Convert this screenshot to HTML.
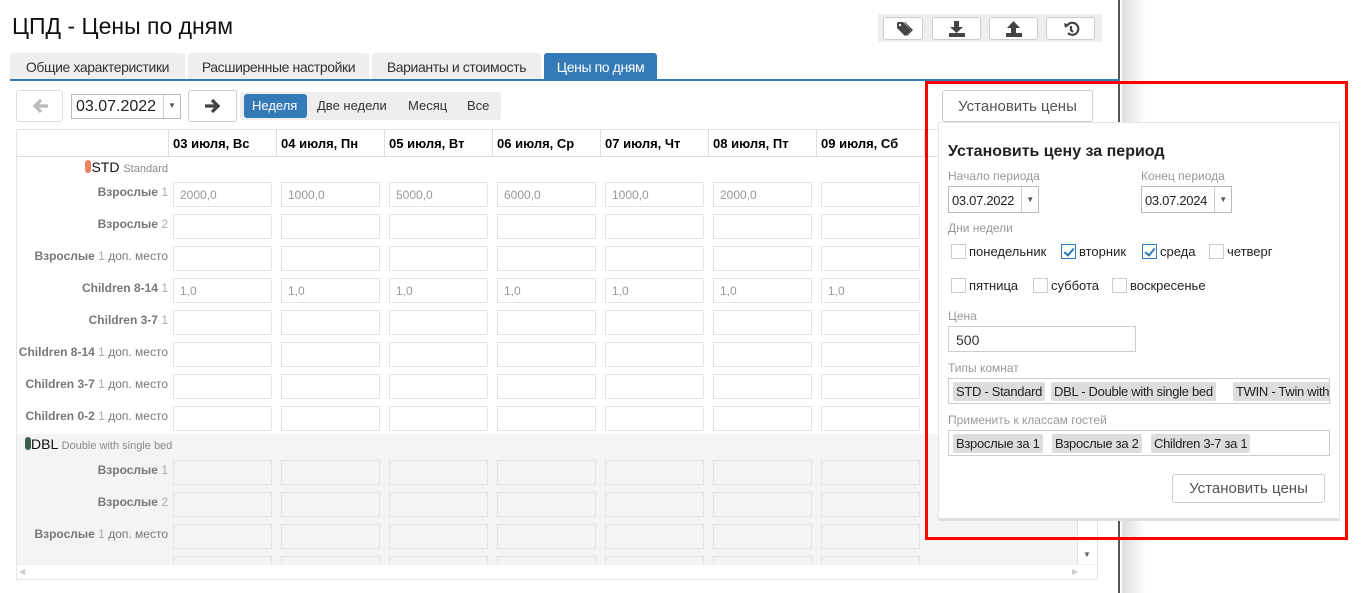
<!DOCTYPE html>
<html><head><meta charset="utf-8"><style>
*{box-sizing:border-box;margin:0;padding:0}
body{width:1362px;height:593px;overflow:hidden;background:#fff;font-family:"Liberation Sans",sans-serif;font-size:13px;color:#333;position:relative}
.a{position:absolute}
.main{left:0;top:0;width:1120px;height:593px;background:#fff;border-right:2px solid #555}
.shadow{left:1122px;top:0;width:24px;height:593px;background:linear-gradient(to right,#ddd,#fff)}
h1{position:absolute;left:12px;top:13px;font-size:23px;font-weight:normal;color:#111}
.tg{left:878px;top:14px;width:224px;height:28px;background:#eee;border-radius:2px}
.tb{top:17px;height:23px;background:#fff;border:1px solid #ccc;border-radius:3px}
.tab{top:53px;height:27px;background:#eee;padding:6px 0 0;text-align:center;font-size:14px;letter-spacing:-0.4px;white-space:nowrap;border-radius:3px 3px 0 0;color:#333}
.tab.act{background:#337ab7;color:#fff}
.line{left:10px;top:79px;width:1110px;height:2px;background:#337ab7}
.btn{background:#fff;border:1px solid #ccc;border-radius:3px}
.seg{left:240px;top:92px;width:261px;height:28px;background:#eee;border-radius:3px}
.sg{top:94px;height:24px;padding:4px 8px 0;font-size:13px;color:#333}
.date{background:#fff;border:1px solid #bbb;font-size:13px;color:#222;white-space:nowrap;overflow:hidden}
.date span.c{position:absolute;right:0;top:0;bottom:0;width:17px;border-left:1px solid #ccc;font-size:8px;text-align:center;line-height:22px;color:#555;background:#fff}
.grid{left:16px;top:129px;width:1082px;height:451px;border:1px solid #e3e3e3;overflow:hidden}
.hd{top:0;height:27px;border-bottom:1px solid #ddd;width:1082px}
.hc{top:0;height:27px;border-left:1px solid #ddd;font-weight:bold;font-size:13px;color:#000;padding:6px 0 0 4px}
.row{left:0;height:32px;width:1060px}
.lab{position:absolute;left:0;width:151px;text-align:right;top:7px;font-weight:bold;color:#777;font-size:12px;white-space:nowrap}
.lab i{font-style:normal;font-weight:normal;color:#aaa}
.lab b{font-weight:normal;color:#777}
.in{position:absolute;top:4px;width:99px;height:25px;border:1px solid #e3e3e3;background:#fff;color:#999;font-size:12px;padding:5px 0 0 6px}
.gray .in{background:#f4f4f4}
.rt{height:24px;font-size:14px;color:#111}
.rt small{font-size:11px;color:#888}
.pop{left:938px;top:122px;width:402px;height:399px;background:#fff;border:1px solid #e3e3e3;border-bottom:3px solid #e0e0e0}
.pl{color:#999;font-size:12px}
.cb{display:inline-block;width:15px;height:15px;border:1px solid #ccc;vertical-align:-3px;margin-right:3px;position:relative;background:#fff}
.cb.on{border-color:#337ab7}
.cb.on:after{content:"";position:absolute;left:4px;top:1px;width:4px;height:8px;border:solid #337ab7;border-width:0 2px 2px 0;transform:rotate(40deg)}
.ck{font-size:13px;color:#222}
.box{border:1px solid #ccc;background:#fff;overflow:hidden}
.tag{position:absolute;top:3px;height:19px;background:#ddd;padding:2px 3px;font-size:13px;letter-spacing:-0.3px;color:#222;white-space:nowrap;border-radius:2px}
.red{left:925px;top:81px;width:423px;height:459px;border:3px solid #f00}
</style></head><body>
<div class="a main"></div>
<div class="a shadow"></div>
<h1>ЦПД - Цены по дням</h1>
<div class="a tg"></div>
<div class="a tb" style="left:883px;width:40px"><svg width="40" height="22"><g transform="translate(13,4)" fill="#444"><path d="M0 1v5l8 8 6-6-8-8H1z"/><circle cx="3" cy="3" r="1.2" fill="#fff"/><path d="M8 0l8 8-6 6-1-1 5-5-7-8z"/></g></svg></div>
<div class="a tb" style="left:932px;width:49px"><svg width="49" height="22"><g fill="#444"><rect x="21" y="3" width="5" height="7"/><path d="M17 9h13l-6.5 6z"/><rect x="16" y="15" width="16" height="4"/></g></svg></div>
<div class="a tb" style="left:989px;width:49px"><svg width="49" height="22"><g fill="#444"><rect x="21" y="9" width="5" height="7"/><path d="M17 10h13l-6.5-7z"/><rect x="16" y="15" width="16" height="4"/></g></svg></div>
<div class="a tb" style="left:1046px;width:49px"><svg width="49" height="22"><g fill="none" stroke="#444" stroke-width="2.2"><path d="M20 8a6 6 0 1 1 1 7"/><path d="M24 8v4l2 2"/></g><path d="M17 5l5 2-4 3z" fill="#444"/></svg></div>
<div class="a tab" style="left:10px;width:175px">Общие характеристики</div>
<div class="a tab" style="left:188px;width:181px">Расширенные настройки</div>
<div class="a tab" style="left:372px;width:169px">Варианты и стоимость</div>
<div class="a tab act" style="left:544px;width:113px">Цены по дням</div>
<div class="a line"></div>
<div class="a btn" style="left:16px;top:90px;width:47px;height:32px;border-color:#ddd"><svg width="47" height="30"><path d="M31 15H19M24 9l-6 6 6 6" stroke="#bbb" stroke-width="3.2" fill="none"/></svg></div>
<div class="a date" style="left:71px;top:94px;width:110px;height:25px;font-size:16px;padding:3px 0 0 4px">03.07.2022<span class="c">▼</span></div>
<div class="a btn" style="left:188px;top:90px;width:49px;height:32px"><svg width="47" height="30"><path d="M16 15h12M23 9l6 6-6 6" stroke="#444" stroke-width="3.2" fill="none"/></svg></div>
<div class="a seg"></div>
<div class="a sg" style="left:244px;width:63px;background:#337ab7;color:#fff;border-radius:3px">Неделя</div>
<div class="a sg" style="left:309px">Две недели</div>
<div class="a sg" style="left:400px">Месяц</div>
<div class="a sg" style="left:459px">Все</div>

<div class="a grid">
<div class="a hd"></div>
<div class="a hc" style="left:151px">03 июля, Вс</div>
<div class="a hc" style="left:259px">04 июля, Пн</div>
<div class="a hc" style="left:367px">05 июля, Вт</div>
<div class="a hc" style="left:475px">06 июля, Ср</div>
<div class="a hc" style="left:583px">07 июля, Чт</div>
<div class="a hc" style="left:691px">08 июля, Пт</div>
<div class="a hc" style="left:799px">09 июля, Сб</div>
<div class="a hc" style="left:907px"></div>
<div class="a row" style="top:28px;height:21px"><div class="lab rt" style="top:1px;font-weight:normal"><span style="display:inline-block;width:6px;height:13px;background:#e8845c;border-radius:3px;vertical-align:-1px"></span><span style="color:#111">STD</span> <small>Standard</small></div></div>
<div class="a row" style="top:48px"><div class="lab">Взрослые <i>1</i></div><div class="in" style="left:156px">2000,0</div><div class="in" style="left:264px">1000,0</div><div class="in" style="left:372px">5000,0</div><div class="in" style="left:480px">6000,0</div><div class="in" style="left:588px">1000,0</div><div class="in" style="left:696px">2000,0</div><div class="in" style="left:804px"></div></div>
<div class="a row" style="top:80px"><div class="lab">Взрослые <i>2</i></div><div class="in" style="left:156px"></div><div class="in" style="left:264px"></div><div class="in" style="left:372px"></div><div class="in" style="left:480px"></div><div class="in" style="left:588px"></div><div class="in" style="left:696px"></div><div class="in" style="left:804px"></div></div>
<div class="a row" style="top:112px"><div class="lab">Взрослые <i>1</i> <b>доп. место</b></div><div class="in" style="left:156px"></div><div class="in" style="left:264px"></div><div class="in" style="left:372px"></div><div class="in" style="left:480px"></div><div class="in" style="left:588px"></div><div class="in" style="left:696px"></div><div class="in" style="left:804px"></div></div>
<div class="a row" style="top:144px"><div class="lab">Children 8-14 <i>1</i></div><div class="in" style="left:156px">1,0</div><div class="in" style="left:264px">1,0</div><div class="in" style="left:372px">1,0</div><div class="in" style="left:480px">1,0</div><div class="in" style="left:588px">1,0</div><div class="in" style="left:696px">1,0</div><div class="in" style="left:804px">1,0</div></div>
<div class="a row" style="top:176px"><div class="lab">Children 3-7 <i>1</i></div><div class="in" style="left:156px"></div><div class="in" style="left:264px"></div><div class="in" style="left:372px"></div><div class="in" style="left:480px"></div><div class="in" style="left:588px"></div><div class="in" style="left:696px"></div><div class="in" style="left:804px"></div></div>
<div class="a row" style="top:208px"><div class="lab">Children 8-14 <i>1</i> <b>доп. место</b></div><div class="in" style="left:156px"></div><div class="in" style="left:264px"></div><div class="in" style="left:372px"></div><div class="in" style="left:480px"></div><div class="in" style="left:588px"></div><div class="in" style="left:696px"></div><div class="in" style="left:804px"></div></div>
<div class="a row" style="top:240px"><div class="lab">Children 3-7 <i>1</i> <b>доп. место</b></div><div class="in" style="left:156px"></div><div class="in" style="left:264px"></div><div class="in" style="left:372px"></div><div class="in" style="left:480px"></div><div class="in" style="left:588px"></div><div class="in" style="left:696px"></div><div class="in" style="left:804px"></div></div>
<div class="a row" style="top:272px"><div class="lab">Children 0-2 <i>1</i> <b>доп. место</b></div><div class="in" style="left:156px"></div><div class="in" style="left:264px"></div><div class="in" style="left:372px"></div><div class="in" style="left:480px"></div><div class="in" style="left:588px"></div><div class="in" style="left:696px"></div><div class="in" style="left:804px"></div></div>
<div class="a gray" style="left:0;top:304px;width:1060px;height:130px;background:#f4f4f4">
<div class="a row" style="top:2px;height:21px"><div class="lab rt" style="top:0;left:8px;width:auto;text-align:left;font-weight:normal"><span style="display:inline-block;width:6px;height:13px;background:#3d5e4f;border-radius:3px;vertical-align:-1px"></span><span style="color:#111">DBL</span> <small>Double with single bed</small></div></div>
<div class="a row" style="top:22px"><div class="lab">Взрослые <i>1</i></div><div class="in" style="left:156px"></div><div class="in" style="left:264px"></div><div class="in" style="left:372px"></div><div class="in" style="left:480px"></div><div class="in" style="left:588px"></div><div class="in" style="left:696px"></div><div class="in" style="left:804px"></div></div>
<div class="a row" style="top:54px"><div class="lab">Взрослые <i>2</i></div><div class="in" style="left:156px"></div><div class="in" style="left:264px"></div><div class="in" style="left:372px"></div><div class="in" style="left:480px"></div><div class="in" style="left:588px"></div><div class="in" style="left:696px"></div><div class="in" style="left:804px"></div></div>
<div class="a row" style="top:86px"><div class="lab">Взрослые <i>1</i> <b>доп. место</b></div><div class="in" style="left:156px"></div><div class="in" style="left:264px"></div><div class="in" style="left:372px"></div><div class="in" style="left:480px"></div><div class="in" style="left:588px"></div><div class="in" style="left:696px"></div><div class="in" style="left:804px"></div></div>
<div class="a row" style="top:118px"><div class="in" style="left:156px"></div><div class="in" style="left:264px"></div><div class="in" style="left:372px"></div><div class="in" style="left:480px"></div><div class="in" style="left:588px"></div><div class="in" style="left:696px"></div><div class="in" style="left:804px"></div></div>
</div>
<div class="a" style="left:0;top:434px;width:1082px;height:17px;background:#fff;border-top:1px solid #eee"><span class="a" style="left:2px;top:2px;font-size:8px;color:#ccc">◀</span><span class="a" style="left:1055px;top:2px;font-size:8px;color:#ccc">▶</span></div>
<div class="a" style="left:1060px;top:27px;width:1px;height:407px;background:#ddd"></div>
<span class="a" style="left:1066px;top:420px;font-size:8px;color:#666">▼</span>
</div>

<div class="a btn" style="left:942px;top:90px;width:151px;height:32px;font-size:15px;color:#555;text-align:center;padding-top:7px">Установить цены</div>
<div class="a pop">
<div class="a" style="left:9px;top:20px;font-size:16px;font-weight:bold;color:#222">Установить цену за период</div>
<div class="a pl" style="left:9px;top:46px">Начало периода</div>
<div class="a date" style="left:9px;top:63px;width:91px;height:27px;font-size:13px;letter-spacing:-0.3px;padding:6px 0 0 3px">03.07.2022<span class="c" style="line-height:25px">▼</span></div>
<div class="a pl" style="left:202px;top:46px">Конец периода</div>
<div class="a date" style="left:202px;top:63px;width:91px;height:27px;font-size:13px;letter-spacing:-0.3px;padding:6px 0 0 3px">03.07.2024<span class="c" style="line-height:25px">▼</span></div>
<div class="a pl" style="left:9px;top:98px">Дни недели</div>
<div class="a ck" style="left:12px;top:121px"><span class="cb"></span>понедельник</div>
<div class="a ck" style="left:122px;top:121px"><span class="cb on"></span>вторник</div>
<div class="a ck" style="left:203px;top:121px"><span class="cb on"></span>среда</div>
<div class="a ck" style="left:270px;top:121px"><span class="cb"></span>четверг</div>
<div class="a ck" style="left:12px;top:155px"><span class="cb"></span>пятница</div>
<div class="a ck" style="left:94px;top:155px"><span class="cb"></span>суббота</div>
<div class="a ck" style="left:173px;top:155px"><span class="cb"></span>воскресенье</div>
<div class="a pl" style="left:9px;top:186px">Цена</div>
<div class="a box" style="left:9px;top:203px;width:188px;height:26px;font-size:14px;padding:5px 0 0 7px">500</div>
<div class="a pl" style="left:9px;top:238px">Типы комнат</div>
<div class="a box" style="left:9px;top:255px;width:382px;height:26px"><span class="tag" style="left:4px">STD - Standard</span><span class="tag" style="left:102px">DBL - Double with single bed</span><span class="tag" style="left:284px">TWIN - Twin with</span></div>
<div class="a pl" style="left:9px;top:290px">Применить к классам гостей</div>
<div class="a box" style="left:9px;top:307px;width:382px;height:26px"><span class="tag" style="left:4px">Взрослые за 1</span><span class="tag" style="left:103px">Взрослые за 2</span><span class="tag" style="left:202px">Children 3-7 за 1</span></div>
<div class="a btn" style="left:233px;top:351px;width:153px;height:29px;font-size:15px;color:#555;text-align:center;padding-top:5px">Установить цены</div>
</div>
<div class="a red"></div>
</body></html>
